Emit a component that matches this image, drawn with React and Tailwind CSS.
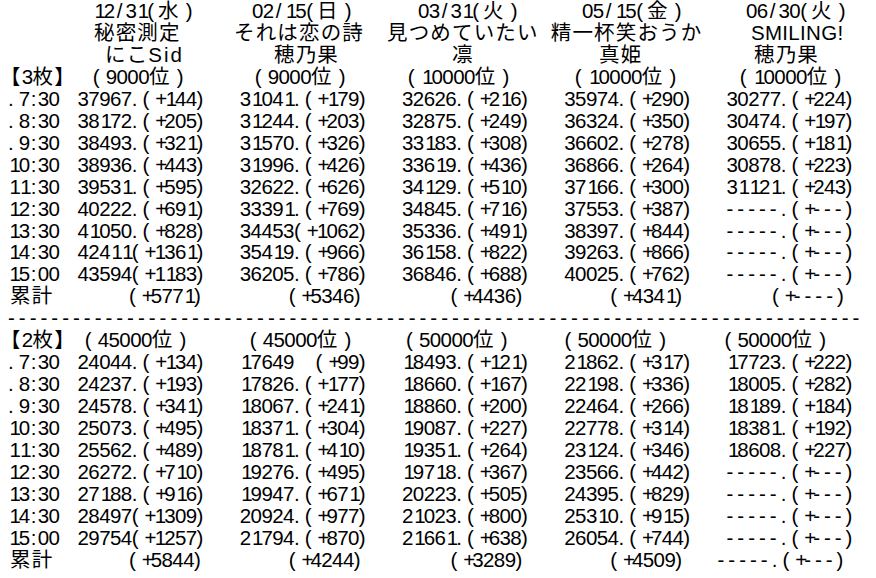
import React from "react";

// fixed-pitch text: half-width chars take one cell, CJK take two
const FULL = /[\u3000-\u9fff【】]/;

function Cell({ c }) {
  if (c === "（") return <span className="inline-block w-[21.66px] pr-[6px] text-right">(</span>;
  if (c === "）") return <span className="inline-block w-[21.66px] pl-[6px]">)</span>;
  if (FULL.test(c)) return <span className="inline-block w-[21.66px]">{c}</span>;
  if (c === "1") return <span className="inline-block w-[10.83px] pl-[1.5px]">1</span>;
  if (c === "+") return <span className="inline-block w-[10.83px] pl-[2px]">+</span>;
  if (c === "/") return <span className="inline-block w-[10.83px] pl-[2px]">/</span>;
  if (c === ":") return <span className="inline-block w-[8px] pl-[1px]">:</span>;
  return <span className="inline-block w-[10.83px]">{c === " " ? "\u00a0" : c}</span>;
}

function Mono({ s }) {
  return <span className="whitespace-pre">{[...s].map((c, i) => <Cell key={i} c={c} />)}</span>;
}

function Line({ label, lp = "ml-[8px]", items, pads }) {
  return (
    <div className="flex h-[21.96px] leading-[21.96px] whitespace-nowrap">
      <div className="w-[77.5px] shrink-0">
        <div className={lp}>{label && <Mono s={label} />}</div>
      </div>
      {items.map((t, i) => (
        <div key={i} className="w-[162.25px] shrink-0">
          <div className={pads ? pads[i] : ""}>{typeof t === "string" ? <Mono s={t} /> : t}</div>
        </div>
      ))}
    </div>
  );
}

const times = [".7:30", ".8:30", ".9:30", "10:30", "11:30", "12:30", "13:30", "14:30", "15:00"];

const rows3 = [
  ["37967.(+144)", "31041.(+179)", "32626.(+216)", "35974.(+290)", "30277.(+224)"],
  ["38172.(+205)", "31244.(+203)", "32875.(+249)", "36324.(+350)", "30474.(+197)"],
  ["38493.(+321)", "31570.(+326)", "33183.(+308)", "36602.(+278)", "30655.(+181)"],
  ["38936.(+443)", "31996.(+426)", "33619.(+436)", "36866.(+264)", "30878.(+223)"],
  ["39531.(+595)", "32622.(+626)", "34129.(+510)", "37166.(+300)", "31121.(+243)"],
  ["40222.(+691)", "33391.(+769)", "34845.(+716)", "37553.(+387)", "-----.(+---)"],
  ["41050.(+828)", "34453(+1062)", "35336.(+491)", "38397.(+844)", "-----.(+---)"],
  ["42411(+1361)", "35419.(+966)", "36158.(+822)", "39263.(+866)", "-----.(+---)"],
  ["43594(+1183)", "36205.(+786)", "36846.(+688)", "40025.(+762)", "-----.(+---)"],
];

const rows2 = [
  ["24044.(+134)", "17649  (+99)", "18493.(+121)", "21862.(+317)", "17723.(+222)"],
  ["24237.(+193)", "17826.(+177)", "18660.(+167)", "22198.(+336)", "18005.(+282)"],
  ["24578.(+341)", "18067.(+241)", "18860.(+200)", "22464.(+266)", "18189.(+184)"],
  ["25073.(+495)", "18371.(+304)", "19087.(+227)", "22778.(+314)", "18381.(+192)"],
  ["25562.(+489)", "18781.(+410)", "19351.(+264)", "23124.(+346)", "18608.(+227)"],
  ["26272.(+710)", "19276.(+495)", "19718.(+367)", "23566.(+442)", "-----.(+---)"],
  ["27188.(+916)", "19947.(+671)", "20223.(+505)", "24395.(+829)", "-----.(+---)"],
  ["28497(+1309)", "20924.(+977)", "21023.(+800)", "25310.(+915)", "-----.(+---)"],
  ["29754(+1257)", "21794.(+870)", "21661.(+638)", "26054.(+744)", "-----.(+---)"],
];

export default function App() {
  return (
    <div className="w-[876px] h-[578px] overflow-hidden bg-white text-black text-[20.5px] font-['Liberation_Sans','Noto_Sans_CJK_JP',sans-serif]">
      <Line
        items={["12/31(水）", "02/15(日）", "03/31(火）", "05/15(金）", "06/30(火）"]}
        pads={["ml-[15.5px]", "ml-[12.25px]", "ml-[16px]", "ml-[17.75px]", "ml-[19.5px]"]}
      />
      <Line
        items={["秘密測定", "それは恋の詩", "見つめていたい", "精一杯笑おうか", <span className="tracking-[0.3px]">SMILING!</span>]}
        pads={["ml-[16.5px]", "ml-[-5.75px]", "ml-[-15px]", "ml-[-13.5px]", "ml-[24.5px]"]}
      />
      <Line
        items={[
          <>
            <Mono s="にこ" />
            <span className="tracking-[2px]">Sid</span>
          </>,
          "穂乃果",
          "凛",
          "真姫",
          "穂乃果",
        ]}
        pads={["ml-[27.5px]", "ml-[34.25px]", "ml-[50px]", "ml-[34.75px]", "ml-[27.5px]"]}
      />
      <Line
        label="【3枚】"
        lp="ml-0"
        items={["（9000位）", "（9000位）", "（10000位）", "（10000位）", "（10000位）"]}
        pads={["ml-[6.5px]", "ml-[6.25px]", "ml-[-3px]", "ml-[1.75px]", "ml-[4.5px]"]}
      />
      {rows3.map((r, i) => <Line key={i} label={times[i]} items={r} />)}
      <Line
        label="累計"
        lp="ml-[10px]"
        items={["(+5771)", "(+5346)", "(+4436)", "(+4341)", "(+----)"]}
        pads={["ml-[51.5px]", "ml-[49px]", "ml-[48.5px]", "ml-[46px]", "ml-[45.5px]"]}
      />
      <div className="flex h-[21.96px] leading-[21.96px] whitespace-nowrap pl-[8px]">
        <Mono s={"-".repeat(79)} />
      </div>
      <Line
        label="【2枚】"
        lp="ml-0"
        items={["（45000位）", "（45000位）", "（50000位）", "（50000位）", "（50000位）"]}
        pads={["ml-[-1.5px]", "ml-[1.25px]", "ml-[-4.75px]", "ml-[-8.5px]", "ml-[-10.75px]"]}
      />
      {rows2.map((r, i) => <Line key={i} label={times[i]} items={r} />)}
      <Line
        label="累計"
        lp="ml-[10px]"
        items={["(+5844)", "(+4244)", "(+3289)", "(+4509)", "-----.(+---)"]}
        pads={["ml-[51.5px]", "ml-[49px]", "ml-[48.5px]", "ml-[46px]", "ml-[-9px]"]}
      />
    </div>
  );
}
